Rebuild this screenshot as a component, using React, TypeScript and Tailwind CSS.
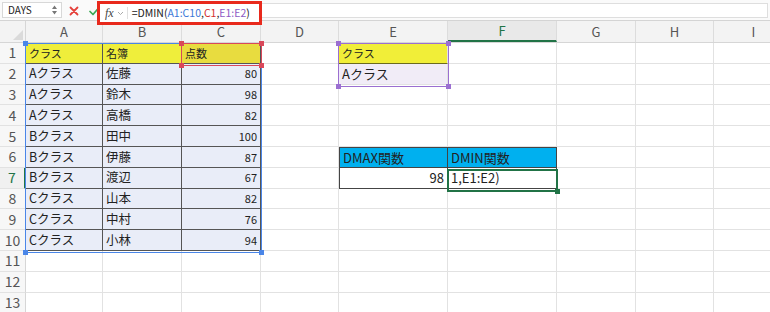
import React from "react";

const cols = [
	{ key: "A", w: "w-[77px]" },
	{ key: "B", w: "w-[79px]" },
	{ key: "C", w: "w-[79px]" },
	{ key: "D", w: "w-[78px]" },
	{ key: "E", w: "w-[109px]" },
	{ key: "F", w: "w-[109px]" },
	{ key: "G", w: "w-[79px]" },
	{ key: "H", w: "w-[78px]" },
	{ key: "I", w: "w-[80px]" },
];

type Cell = { text?: string; cls?: string; right?: boolean };

const table: Record<string, Cell> = {};
const rowsData: [string, string, string][] = [
	["Aクラス", "佐藤", "80"],
	["Aクラス", "鈴木", "98"],
	["Aクラス", "高橋", "82"],
	["Bクラス", "田中", "100"],
	["Bクラス", "伊藤", "87"],
	["Bクラス", "渡辺", "67"],
	["Cクラス", "山本", "82"],
	["Cクラス", "中村", "76"],
	["Cクラス", "小林", "94"],
];

table["A1"] = { text: "クラス", cls: "bg-[#efee3b] border-r-[#555] border-b-[#555] text-[11px]" };
table["B1"] = { text: "名簿", cls: "bg-[#efee3b] border-r-[#555] border-b-[#555] text-[11px]" };
table["C1"] = { text: "点数", cls: "bg-[#e8dc3f] border-r-[#555] border-b-[#555] text-[11px]" };
rowsData.forEach((r, i) => {
	const n = i + 2;
	table["A" + n] = { text: r[0], cls: "bg-[#e9edf8] border-r-[#555] border-b-[#555] text-[12.5px]" };
	table["B" + n] = { text: r[1], cls: "bg-[#e9edf8] border-r-[#555] border-b-[#555] text-[12.5px]" };
	table["C" + n] = { text: r[2], right: true, cls: "bg-[#e9edf8] border-r-[#555] border-b-[#555] text-[11px]" };
});
table["E1"] = { text: "クラス", cls: "bg-[#f1ee38] border-b-[#6b6a1e] text-[11px]" };
table["E2"] = { text: "Aクラス", cls: "bg-[#f1ecf7] text-[13px]" };
table["E6"] = { text: "DMAX関数", cls: "bg-[#00b0ef] border-r-[#444] border-b-[#444] border-l border-l-[#444] border-t border-t-[#444] text-[13px]" };
table["F6"] = { text: "DMIN関数", cls: "bg-[#00b0ef] border-r-[#444] border-b-[#444] border-t border-t-[#444] text-[13px]" };
table["E7"] = { text: "98", right: true, cls: "bg-white border-r-[#444] border-b-[#444] border-l border-l-[#444] text-[13px]" };
table["F7"] = { text: "1,E1:E2)", cls: "bg-white border-r-[#444] border-b-[#444] text-[13px]" };

const font = { fontFamily: '"Noto Sans CJK JP", "Noto Sans", sans-serif' };

function Corner({ className }: { className: string }) {
	return <div className={"absolute w-[5px] h-[5px] " + className} />;
}

function RangeBox({ className, color }: { className: string; color: string }) {
	return (
		<div className={"absolute border pointer-events-none " + className}>
			<Corner className={color + " -left-[3px] -top-[3px]"} />
			<Corner className={color + " -right-[3px] -top-[3px]"} />
			<Corner className={color + " -left-[3px] -bottom-[3px]"} />
			<Corner className={color + " -right-[3px] -bottom-[3px]"} />
		</div>
	);
}

export default function App() {
	return (
		<div className="w-[770px] h-[312px] overflow-hidden bg-white relative" style={font}>
			{/* formula bar */}
			<div className="h-[21px] flex items-start bg-[#fafafa] border-b border-[#d4d4d4] relative z-10">
				<div className="mt-[2px] ml-[2px] w-[60px] h-[16px] bg-white border border-[#d8d8d8] flex items-center justify-between pl-[5px] pr-[4px]">
					<span className="text-[10px] text-[#222] leading-none">DAYS</span>
					<svg width="5" height="10" viewBox="0 0 5 10">
						<path d="M0 4 L2.5 0.5 L5 4 Z M0 6 L2.5 9.5 L5 6 Z" fill="#777" />
					</svg>
				</div>
				<div className="mt-[6px] ml-[5px] w-[14px] flex justify-center">
					<svg width="10" height="10" viewBox="0 0 10 10">
						<path d="M1.5 1.5 L8.5 8.5 M8.5 1.5 L1.5 8.5" stroke="#e5403a" strokeWidth="1.8" strokeLinecap="round" />
					</svg>
				</div>
				<div className="mt-[6px] ml-[7px] w-[12px] flex justify-center">
					<svg width="11" height="10" viewBox="0 0 11 10">
						<path d="M1 5.5 L4 8.5 L10 1.5" stroke="#3aa955" strokeWidth="1.7" fill="none" strokeLinecap="round" strokeLinejoin="round" />
					</svg>
				</div>
				{/* red highlight around fx & formula */}
				<div className="mt-[1px] ml-[-3px] w-[165px] h-[24px] shrink-0 border-[3px] border-[#e8291c] bg-white flex items-center">
					<span className="ml-[5px] text-[12px] italic text-[#444] leading-none" style={{ fontFamily: '"Liberation Serif", serif' }}>
						fx
					</span>
					<svg className="ml-[3px]" width="7" height="5" viewBox="0 0 7 5">
						<path d="M1 1 L3.5 3.5 L6 1" stroke="#aaa" strokeWidth="1" fill="none" />
					</svg>
					<div className="ml-[3px] w-px h-[12px] bg-[#e0e0e0]" />
					<span className="ml-[4px] text-[10.5px] leading-none text-[#222] whitespace-nowrap">
						=DMIN(<span className="text-[#3c78d8]">A1:C10</span>,<span className="text-[#d32f2f]">C1</span>,<span className="text-[#8e5cc4]">E1:E2</span>)
					</span>
				</div>
				<div className="flex-1 mt-[3px] h-[15px] mr-[2px] bg-white border border-l-0 border-[#dedede]" />
			</div>
			{/* column headers */}
			<div className="flex h-[22px] bg-[#f3f3f3] border-b border-[#d6d6d6]">
				<div className="w-[26px] shrink-0 border-r border-[#d6d6d6] flex items-end justify-end p-[2px]">
					<div className="w-0 h-0 border-l-[10px] border-l-transparent border-b-[10px] border-b-[#dadada]" />
				</div>
				{cols.map((c) => (
					<div
						key={c.key}
						className={`${c.w} shrink-0 border-r border-[#dcdcdc] flex items-center justify-center text-[13px] ${
							c.key === "F" ? "text-[#217346] bg-[#e9e9e9] border-b-2 border-b-[#217346]" : "text-[#555]"
						}`}
					>
						{c.key}
					</div>
				))}
			</div>
			{/* rows */}
			{Array.from({ length: 13 }, (_, i) => i + 1).map((r) => (
				<div key={r} className="flex h-[20.8px]">
					<div
						className={`w-[26px] shrink-0 flex items-center justify-center text-[14px] border-b border-[#e2e2e2] ${
							r === 7 ? "text-[#217346] border-r-2 border-r-[#217346] bg-[#f0f0f0]" : "text-[#555] border-r border-r-[#d6d6d6] bg-[#f7f7f7]"
						}`}
					>
						{r}
					</div>
					{cols.map((c) => {
						const cell = table[c.key + r];
						return (
							<div
								key={c.key}
								className={`${c.w} shrink-0 border-r border-b border-[#e2e2e2] flex items-center px-[3px] text-[#222] whitespace-nowrap overflow-hidden ${
									cell?.right ? "justify-end" : ""
								} ${cell?.cls ?? ""}`}
							>
								{cell?.text}
							</div>
						);
					})}
				</div>
			))}
			{/* formula reference highlights */}
			<RangeBox className="left-[25px] top-[43px] w-[237px] h-[210px] border-[#4a86e8]" color="bg-[#4a86e8]" />
			<RangeBox className="left-[181px] top-[43px] w-[81px] h-[23px] border-[#d9485a]" color="bg-[#d9485a]" />
			<RangeBox className="left-[338px] top-[43px] w-[111px] h-[44px] border-[#9b6fd1]" color="bg-[#9b6fd1]" />
			{/* active cell F7 */}
			<div className="absolute left-[447px] top-[168.8px] w-[111px] h-[22.8px] border-2 border-[#217346] pointer-events-none">
				<Corner className="bg-[#217346] -right-[4px] -bottom-[4px]" />
			</div>
		</div>
	);
}
